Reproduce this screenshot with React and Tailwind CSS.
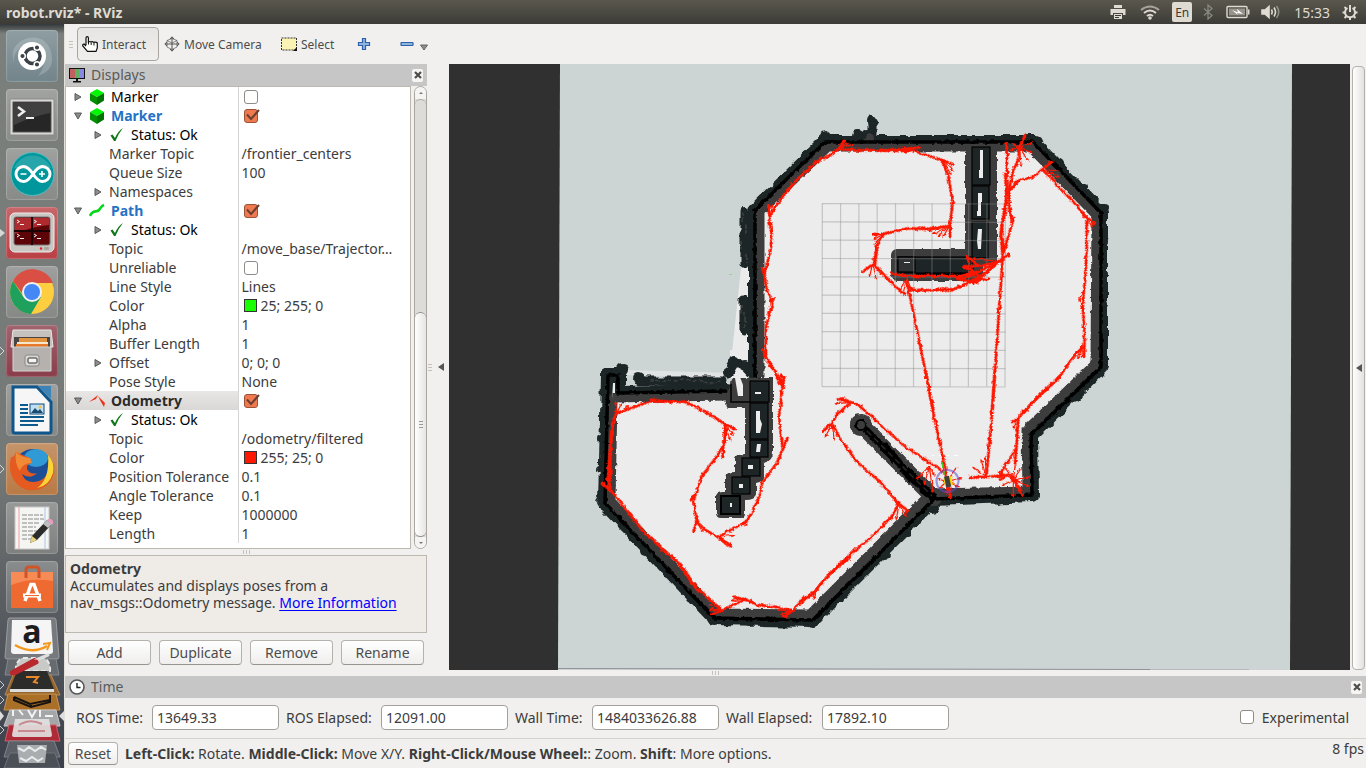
import React from "react";

const RED = "#ff1900";

/* ---------- map drawing ---------- */

function Fan({ at, tips }) {
  const [x, y] = at;
  return tips.map(([tx, ty], i) => {
    const a = Math.atan2(ty - y, tx - x);
    const bx = tx - 11 * Math.cos(a);
    const by = ty - 11 * Math.sin(a);
    const px = 5 * Math.sin(a);
    const py = -5 * Math.cos(a);
    return (
      <g key={i}>
        <line x1={x} y1={y} x2={bx} y2={by} stroke={RED} strokeWidth="3.5" />
        <polygon points={`${tx},${ty} ${bx + px},${by + py} ${bx - px},${by - py}`} fill={RED} />
      </g>
    );
  });
}

function Trail({ d }) {
  return (
    <g fill="none" stroke={RED} strokeLinejoin="round">
      <path d={d} strokeWidth="6" strokeLinecap="round" />
      <path d={d} strokeWidth="11" strokeDasharray="2 3" />
    </g>
  );
}

const trailsWest = [
  "M80 190 L120 176 L190 150 L240 156 L285 155 L345 185 L405 222 L435 238",
  "M405 225 L405 275 L380 320 L335 380 L315 435 L302 450",
  "M400 275 L398 322",
  "M315 435 L312 460 L320 515 L310 546",
  "M320 515 L345 540 L385 562 L424 590",
  "M385 562 L435 532 L465 520 L485 490 L512 430 L515 402 L560 340 L580 295 L593 262",
  "M578 295 L567 200 L578 110 L582 78",
  "M580 110 L545 50 L518 2",
  "M80 185 L66 230 L60 300 L55 380 L62 420",
  "M68 220 L62 300 L60 400",
  "M35 398 L75 435 L110 480 L165 550 L190 568 L225 605 L270 640 L320 715 L345 735 L397 780 L363 793",
  "M200 580 L265 640 L315 712",
  "M397 780 L465 748 L428 742",
  "M465 748 L505 765 L560 771 L610 782 L582 798",
  "M610 782 L640 745 L672 728 L710 680 L745 648 L780 622",
];
const fansWest = [
  [[80, 190], [[76, 152], [96, 157], [118, 168]]],
  [[405, 225], [[438, 236], [432, 258], [421, 272], [398, 328]]],
  [[320, 515], [[341, 550], [354, 548], [310, 550]]],
  [[385, 562], [[434, 555], [415, 592], [428, 586]]],
  [[315, 435], [[300, 444], [302, 456]]],
  [[580, 110], [[573, 68], [560, 96]]],
  [[578, 300], [[576, 258]]],
  [[62, 420], [[50, 378], [34, 396]]],
  [[397, 780], [[354, 746], [355, 763], [360, 778], [361, 794]]],
  [[465, 748], [[426, 738], [420, 752]]],
  [[610, 782], [[560, 780], [570, 794], [580, 803]]],
  [[680, 725], [[671, 750]]],
];

const trailsNorthWest = [
  "M310 130 L345 92",
  "M320 118 L390 121 L480 121 L567 113",
  "M310 130 L260 155 L200 210 L165 250 L125 308",
  "M116 285 L118 330 L126 380 L120 430 L103 490 L98 470",
  "M103 490 L108 530 L125 575 L131 562",
  "M127 580 L108 650 L108 735 L97 718",
  "M102 735 L135 780 L158 825 L162 798",
];
const fansNorthWest = [
  [[322, 116], [[348, 90], [358, 98], [372, 103]]],
  [[122, 315], [[112, 282], [128, 282], [142, 284]]],
  [[103, 500], [[96, 468], [112, 458]]],
  [[125, 590], [[118, 555], [132, 560]]],
  [[155, 825], [[152, 790], [142, 795]]],
];

const trailsNorthEast = [
  "M110 121 L178 114",
  "M60 121 L165 124 L200 136 L240 148 L280 164",
  "M245 150 L265 195 L278 278 L270 345 L270 382",
  "M268 348 L200 357 L145 355 L70 372 L40 372",
  "M70 375 L52 405 L45 460 L6 486",
  "M52 410 L42 455",
  "M40 460 L75 498 L120 545 L138 552",
  "M93 490 L140 498 L330 498 L345 492",
  "M150 540 L210 541 L280 538 L330 515 L388 506",
  "M140 510 L150 560 L175 680 L220 900",
  "M310 470 L370 466 L415 456 L447 433",
  "M320 440 L352 466",
  "M312 468 L335 482 L360 500 L340 520",
  "M290 505 L330 515 L360 500 L425 450",
  "M300 500 L355 485 L410 460",
  "M440 100 L441 180 L443 240 L430 320 L422 370 L428 440 L420 560 L397 900",
  "M436 190 L440 280 L426 350 L430 420",
  "M448 235 L460 180 L475 150 L478 110 L496 74",
  "M447 240 L448 300 L458 335 L440 395 L430 430",
  "M450 240 L475 212 L520 200 L577 154",
  "M548 180 L575 205 L600 235 L640 275 L675 318 L705 343",
  "M680 320 L680 420 L676 500 L668 580 L674 680 L672 742",
  "M668 712 L630 755 L600 798 L530 865 L498 900",
];
const fansNorthEast = [
  [[245, 148], [[284, 165], [280, 182], [275, 196], [262, 200]]],
  [[268, 348], [[203, 362], [218, 372], [232, 380], [247, 385]]],
  [[72, 372], [[38, 376], [38, 390], [40, 405]]],
  [[38, 460], [[4, 489], [28, 504], [50, 509], [68, 498]]],
  [[140, 505], [[116, 545], [128, 556], [158, 547]]],
  [[440, 140], [[440, 96], [450, 128]]],
  [[478, 112], [[520, 97], [518, 130], [507, 155], [484, 172], [450, 120], [498, 70], [455, 100]]],
  [[548, 180], [[597, 182], [600, 202], [592, 218], [580, 152]]],
  [[450, 240], [[470, 210], [485, 206]]],
  [[677, 318], [[706, 343], [700, 357], [684, 348]]],
  [[668, 540], [[656, 576], [668, 580]]],
  [[668, 710], [[638, 738], [652, 750], [665, 745]]],
  [[420, 455], [[452, 432], [370, 475], [350, 515], [328, 520], [300, 512], [335, 445]]],
  [[340, 485], [[305, 470], [285, 503], [318, 438], [355, 525]]],
  [[448, 290], [[462, 332], [455, 345]]],
];

const trailsSouth = [
  "M376 0 L386 55 L400 130 L437 300 L452 384",
  "M585 0 L575 145 L560 312",
  "M508 323 L560 321 L600 317 L630 315 L650 340 L668 374",
  "M636 310 L602 328",
  "M780 20 L705 90 L655 143 L636 160",
  "M655 145 L651 210 L645 280",
  "M645 240 L625 275 L610 290 L600 330",
  "M437 310 L400 285 L310 225 L270 190 L215 140 L172 102 L150 96 L112 84",
  "M150 100 L112 132 L95 160 L66 186",
  "M97 162 L120 205 L170 275 L240 335 L295 400 L326 424",
  "M297 400 L275 440 L210 505 L155 550 L85 615 L40 672 L0 695",
];
const fansSouth = [
  [[558, 318], [[516, 290], [542, 266], [556, 260], [506, 323]]],
  [[655, 145], [[632, 160], [638, 180], [648, 188]]],
  [[640, 330], [[690, 320], [690, 350], [666, 375], [640, 384], [666, 290], [647, 272], [592, 305], [612, 288], [602, 348], [660, 335]]],
  [[440, 335], [[472, 292], [488, 323], [478, 352], [452, 388], [416, 356], [410, 325], [425, 273], [440, 375], [462, 340]]],
  [[388, 290], [[347, 328], [372, 347], [399, 370], [404, 318]]],
  [[150, 98], [[103, 101], [108, 86], [122, 78]]],
  [[97, 162], [[63, 189], [74, 203], [103, 213]]],
  [[297, 403], [[328, 428], [320, 442], [288, 452], [272, 442]]],
  [[40, 665], [[40, 690], [0, 705]]],
];

function Layer({ x, y, trails, fans }) {
  return (
    <g transform={`translate(${x} ${y}) scale(0.33333)`}>
      {trails.map((d, i) => (
        <Trail key={i} d={d} />
      ))}
      {fans.map(([at, tips], i) => (
        <Fan key={i} at={at} tips={tips} />
      ))}
    </g>
  );
}

const wall =
  "M755 377 V210 L825 142 L1033 142 L1101 213 L1101 367 L1031 435 L1032 495 L934 499 L813 620 L714 618 L605 503 L608 375 L618 375 L618 393 L727 391";
const wallInner =
  "M760 377 V212 L828 147 L1030 147 L1096 215 L1095 364 L1026 430 L1027 491 L931 493 L810 614 L717 613 L611 501 L613 398 L727 396";
const bumps = [
  [825, 137, 6], [873, 122, 6], [858, 135, 5], [867, 135, 5], [1036, 142, 6], [1058, 164, 5], [1083, 187, 4],
  [1103, 208, 5], [1105, 241, 4], [1105, 273, 4], [1105, 305, 4], [1104, 337, 3], [1100, 370, 7], [1075, 397, 5],
  [1034, 495, 5], [1000, 499, 5], [932, 507, 6], [908, 532, 4], [885, 554, 5], [840, 600, 4], [813, 621, 7],
  [748, 621, 5], [714, 619, 8], [690, 597, 5], [667, 573, 5], [645, 551, 5], [624, 527, 4], [602, 503, 6],
  [600, 470, 4], [600, 439, 4], [607, 374, 6], [622, 370, 6], [639, 379, 6], [745, 212, 5], [728, 373, 5], [735, 361, 5], [745, 365, 5], [756, 378, 6],
];

const gridLines = [0, 1, 2, 3, 4, 5, 6, 7, 8, 9, 10];

function MapView() {
  return (
    <svg viewBox="449 64 901 606" className="block h-full w-full" role="img" aria-label="3D view of the robot map">
      <defs>
        <filter id="rough" x="449" y="64" width="901" height="606" filterUnits="userSpaceOnUse">
          <feTurbulence type="fractalNoise" baseFrequency="0.09" numOctaves="2" seed="4" />
          <feDisplacementMap in="SourceGraphic" scale="7" xChannelSelector="R" yChannelSelector="G" />
        </filter>
        <filter id="grain" x="449" y="64" width="901" height="606" filterUnits="userSpaceOnUse">
          <feTurbulence type="fractalNoise" baseFrequency="0.2" numOctaves="2" seed="9" />
          <feDisplacementMap in="SourceGraphic" scale="3.5" xChannelSelector="R" yChannelSelector="G" />
        </filter>
      </defs>
      <rect x="449" y="64" width="901" height="606" fill="#303030" />
      <polygon points="560,64 1292,64 1290,670 558,670" fill="#cdd4d4" />
      <path d="M558 668.500 L1150 669.500" stroke="#8f9494" strokeWidth="1" />
      <path d="M1150 669.500 H1249" stroke="#b4baba" strokeWidth="1" />
      <path d="M741 268 L731 362 L748 362 L752 268 Z" fill="#ebebeb" />
      <path d="M625 370 L735 373 L735 378 L625 375 Z" fill="#dfe3e3" />
      <path d="M730 350 H748 V378 H730 Z" fill="#ebebeb" />
      <path d={wall + " Z"} fill="#ececec" />
      <path d="M727 391 L755 377 L761 400 L735 405 Z" fill="#ececec" />

      <g filter="url(#rough)">
        <g stroke="#1e2526" fill="none" strokeLinejoin="round" strokeLinecap="round">
          <path d={wall} strokeWidth="14" />
          <path d="M744 213 V264 M744 300 V331 M640 381 H722 M872 124 V138 M728 374 L735 362 L746 368 L757 380" strokeWidth="9" />
        </g>
        {bumps.map(([x, y, r], i) => (
          <circle key={i} cx={x} cy={y} r={r} fill="#1e2526" />
        ))}
        <path d="M742 212 v10 m4 2 v12 m-5 6 v8 m5 4 v8 M741 304 v10 m4 -2 v16 M650 381 l14 -1 l12 2 l16 -2 l18 2 l10 -1" stroke="#3c4142" fill="none" strokeWidth="1.500" strokeDasharray="4 2" />
      </g>

      <g filter="url(#grain)">
        <g fill="none" stroke="#3c3c3c" strokeLinejoin="round">
          <path d={wallInner} strokeWidth="9" />
          <path d="M861 425 L934 498" strokeWidth="16" strokeLinecap="round" />
        </g>
        <g fill="#3c3c3c">
          <circle cx="861" cy="425" r="11" />
          <rect x="965" y="145" width="32" height="120" rx="4" />
          <rect x="891" y="249" width="92" height="32" rx="6" />
          <path d="M733 378 H773 V452 Q773 461 764 463 V478 Q764 482 756 484 V494 Q756 500 745 500 V514 Q745 518 740 518 H721 Q716 518 716 513 V496 Q717 491 725 491 V477 Q726 472 735 472 V459 Q737 454 745 454 V408 H730 Q725 408 726 396 Z" />
          <path d="M870 132 q6 4 3 12 h-10 q0 -6 7 -12 Z" />
        </g>
      </g>

      <g fill="#1e2526" stroke="#000000" strokeWidth="1.200">
        <rect x="972" y="147" width="18" height="38" />
        <rect x="972" y="186" width="17" height="33" />
        <rect x="972" y="222" width="16" height="36" />
        <rect x="898" y="257" width="75" height="16" />
        <rect x="898" y="257" width="17" height="15" fill="#303334" />
        <rect x="750" y="381" width="19" height="21" />
        <rect x="750" y="403" width="18" height="36" />
        <rect x="750" y="440" width="18" height="17" />
        <rect x="742" y="458" width="18" height="18" />
        <rect x="732" y="477" width="18" height="17" />
        <rect x="721" y="496" width="19" height="18" strokeWidth="2" />
        <path d="M731 384 V402 H750" fill="none" strokeWidth="1.500" />
      </g>
      <g fill="#ececec">
        <path d="M980 150 h3 v28 h-4 v-8 h1 Z" />
        <path d="M978 193 h4 v9 h-1 v14 h-4 v-5 h1 Z" />
        <path d="M978 229 h4 l-1 20 h-3 l-1 -8 Z" />
        <rect x="904" y="262" width="6" height="1" />
        <rect x="755" y="392" width="6" height="2" />
        <path d="M756 411 h4 v8 l2 5 l-2 9 h-4 Z" />
        <path d="M757 444 h4 l-1 8 h-4 Z" />
        <rect x="748" y="465" width="5" height="4" />
        <rect x="739" y="484" width="4" height="4" />
        <rect x="730" y="503" width="2" height="4" />
        <path d="M735 378 l5 -1 l3 8 v11 h-5 Z" />
        <path d="M613 383 h2 v10 h-3 v6 Z" />
      </g>

      <g fill="none" stroke="#000000" strokeLinejoin="round" filter="url(#grain)">
        <path d={wall} strokeWidth="3.500" />
        <circle cx="861" cy="425" r="5" strokeWidth="2" />
        <path d="M865 429 L934 498" strokeWidth="7" />
        <path d="M884 447 L895 458 M905 470 L916 481 M924 490 L932 496" strokeWidth="9" strokeLinecap="round" />
        <path d="M916 274 H975" strokeWidth="2" />
      </g>
      <path d="M867 431 L932 496" stroke="#24292a" strokeWidth="1.500" strokeDasharray="6 4" />

      <g stroke="#8c8c8c" strokeOpacity="0.420" strokeWidth="1.200">
        {gridLines.map((n) => (
          <React.Fragment key={n}>
            <line x1={822.3 + n * 18.3} y1="203.500" x2={822 + n * 18.3} y2="386.500" />
            <line x1="822" y1={203.6 + n * 18.3} x2="1005.500" y2={204 + n * 18.3} />
          </React.Fragment>
        ))}
      </g>

      <g filter="url(#grain)">
        <Layer x={590} y={350} trails={trailsWest} fans={fansWest} />
        <Layer x={730} y={110} trails={trailsNorthWest} fans={fansNorthWest} />
        <Layer x={860} y={110} trails={trailsNorthEast} fans={fansNorthEast} />
        <Layer x={800} y={370} trails={trailsSouth} fans={fansSouth} />
      </g>

      <g>
        <circle cx="947.500" cy="481" r="11" fill="none" stroke="#5a4fd0" strokeOpacity="0.550" strokeWidth="2" />
        <rect x="944" y="477" width="8" height="9" fill="#f0e000" transform="rotate(-12 948 481)" />
        <rect x="945" y="476" width="5" height="11" fill="#404040" transform="rotate(-12 948 481)" />
        <path d="M942 462 l1 6 M944 471 v4" stroke="#3fd020" strokeWidth="1.500" />
        <path d="M932 455.500 h2 m5 0 h2 m5 0 h3 m5 0 h4" stroke="#ffffff" strokeWidth="1" />
        <rect x="729" y="274" width="3" height="1" fill="#86dc86" />
      </g>
    </svg>
  );
}

/* ---------- launcher ---------- */

const UbuntuIcon = () => (
  <svg viewBox="0 0 52 52" className="h-full w-full">
    <path d="M8 34 Q2 14 22 8 Q40 5 45 22 Q50 40 32 46 Q40 36 38 26 Q26 6 14 18 Q6 24 8 34Z" fill="#fff" opacity="0.180" />
    <circle cx="26" cy="26" r="14" fill="#fff" />
    <circle cx="26.500" cy="26" r="7.500" fill="none" stroke="#3c4245" strokeWidth="3.500" />
    <g stroke="#fff" strokeWidth="1.500" fill="#3c4245">
      <circle cx="16.500" cy="26" r="2.800" />
      <circle cx="31" cy="17.500" r="2.800" />
      <circle cx="31" cy="34.500" r="2.800" />
    </g>
  </svg>
);
const TerminalIcon = () => (
  <svg viewBox="0 0 52 52" className="h-full w-full">
    <rect x="4" y="10" width="44" height="36" rx="1" fill="#d8d8d6" stroke="#8a8a88" />
    <rect x="7" y="13" width="38" height="30" fill="#262626" stroke="#555" />
    <path d="M8 14 H44 V24 Q24 28 8 36 Z" fill="#fff" opacity="0.120" />
    <path d="M12 18 L18 22.500 L12 27" fill="none" stroke="#eee" strokeWidth="2.500" />
    <rect x="20" y="28" width="8" height="2" fill="#eee" />
  </svg>
);
const ArduinoIcon = () => (
  <svg viewBox="0 0 52 52" className="h-full w-full">
    <circle cx="26.500" cy="26" r="21.500" fill="#00979c" stroke="#55bcc0" />
    <path d="M8 20 A20 20 0 0 1 45 20 Q26 24 8 20Z" fill="#fff" opacity="0.150" />
    <path
      d="M27 26 C23 20 20 18.500 17.500 18.500 A7.500 7.500 0 0 0 17.500 33.500 C20 33.500 23 32 27 26 C31 20 34 18.500 36.500 18.500 A7.500 7.500 0 0 1 36.500 33.500 C34 33.500 31 32 27 26Z"
      fill="none"
      stroke="#fff"
      strokeWidth="3"
    />
    <path d="M14.500 26 h6 M33 26 h6 M36 23 v6" stroke="#fff" strokeWidth="1.600" />
  </svg>
);
const TerminatorIcon = () => (
  <svg viewBox="0 0 52 52" className="h-full w-full">
    <rect x="4" y="6" width="44" height="39" rx="5" fill="#c9c6c2" stroke="#eee" />
    <rect x="8" y="10" width="36" height="28" rx="2" fill="#5c0408" stroke="#777" />
    <path d="M9 11 H43 V18 Q24 20 9 27Z" fill="#d33a3e" opacity="0.700" />
    <path d="M26 10 V38 M8 24 H44" stroke="#1c0304" strokeWidth="2" />
    <path d="M11 13 l2.500 1.500 l-2.500 1.500 M28 13 l2.500 1.500 l-2.500 1.500 M11 27 l2.500 1.500 l-2.500 1.500 M28 27 l2.500 1.500 l-2.500 1.500" fill="none" stroke="#eee" />
    <path d="M14 17.500 h4 M31 17.500 h4 M14 31.500 h4 M31 31.500 h4" stroke="#eee" />
    <circle cx="35" cy="41.500" r="1.200" fill="#e02020" />
    <rect x="38" y="40" width="5" height="3" rx="1" fill="#aaa69f" />
  </svg>
);
const ChromeIcon = () => (
  <svg viewBox="0 0 52 52" className="h-full w-full">
    <circle cx="26" cy="26" r="22" fill="#ffcd40" />
    <path d="M7 15 A22 22 0 0 0 25 48 L35 31 L26 26 L17 30Z" fill="#1fa05d" />
    <path d="M7 15 A22 22 0 0 1 47 17 L26 17 L18 30Z" fill="#da4f43" />
    <circle cx="26" cy="26" r="10" fill="#f1f1f1" />
    <circle cx="26" cy="26" r="8" fill="#4587f4" />
  </svg>
);
const FilesIcon = () => (
  <svg viewBox="0 0 52 52" className="h-full w-full">
    <path d="M7 5 H45 L47 22 H5Z" fill="#c5c2be" stroke="#e8e6e4" />
    <rect x="8" y="12" width="36" height="11" fill="#4a4542" />
    <path d="M13 13 H41 V22 H13Z" fill="#e2943e" />
    <path d="M11 17 H42 V22 H11Z" fill="#f6e6cc" />
    <path d="M10 19 H42 V23 H10Z" fill="#e8782a" />
    <path d="M7 22 H45 V46 H7Z" fill="#b4b1ae" stroke="#d5d3d1" />
    <rect x="19" y="30" width="14" height="11" rx="2" fill="#d8d6d4" stroke="#8a8784" />
    <rect x="22" y="33" width="9" height="5" rx="1" fill="#f4f4f4" stroke="#333" />
  </svg>
);
const WriterIcon = () => (
  <svg viewBox="0 0 52 52" className="h-full w-full">
    <path d="M7 3 H31 L45 18 V47 Q45 49 43 49 H9 Q7 49 7 47Z" fill="#f6f6f6" stroke="#0f568c" strokeWidth="3" />
    <path d="M32 2 H45 V15Z" fill="#3d83b6" />
    <path d="M14 21 h8 M14 25 h8 M14 29 h8 M14 33 h24 M14 37 h24 M14 41 h18" stroke="#0d5a8e" strokeWidth="2" />
    <rect x="24" y="20" width="14" height="10" fill="#bfe0f4" stroke="#0d4b78" />
    <path d="M25 29 l4 -5 l3 3 l2 -2 l3 4Z" fill="#1b4b70" />
    <circle cx="34" cy="23" r="1.500" fill="#f5c542" />
  </svg>
);
const FirefoxIcon = () => (
  <svg viewBox="0 0 52 52" className="h-full w-full">
    <circle cx="27" cy="25" r="19" fill="#1d4e96" />
    <ellipse cx="30" cy="15" rx="12" ry="9" fill="#2f9ad6" />
    <path d="M5 14 Q8 15 10 9 Q16 12 24 15 L26 20 Q20 21 21 26 Q24 32 31 30 Q24 37 16 31 Q20 42 33 38 Q44 34 42 18 Q48 26 48 20 Q50 40 34 46 Q16 51 7 36 Q2 27 5 14Z" fill="#e45a20" />
    <path d="M42 12 Q49 20 47 30 Q43 43 31 45 Q44 36 42 12Z" fill="#fbd436" />
    <path d="M10 9 Q14 14 24 15 L26 20 Q16 20 14 28 Q8 20 10 9Z" fill="#f08a35" />
  </svg>
);
const GeditIcon = () => (
  <svg viewBox="0 0 52 52" className="h-full w-full">
    <rect x="9" y="5" width="34" height="42" fill="#f5f5f3" stroke="#c8c8c6" />
    <path d="M13 5 V47" stroke="#f0a0a0" />
    <path d="M39 5 V47" stroke="#a9c6ea" />
    <path d="M16 13 h21 M16 17 h22 M16 21 h18 M16 25 h14 M16 29 h18 M16 33 h12 M16 37 h10" stroke="#8a8a88" strokeDasharray="5 1" />
    <path d="M24 41 L26 34 L41 18 L46 22 L31 38Z" fill="#2b2b2b" />
    <path d="M24 41 L26 34 L31 38Z" fill="#e6d47a" />
    <path d="M37 22 L41 18 L46 22 L42 26Z" fill="#bdbdbd" />
    <path d="M41 18 Q44 15 47 19 Q48 21 46 23Z" fill="#e89cc0" />
  </svg>
);
const SoftwareIcon = () => (
  <svg viewBox="0 0 52 52" className="h-full w-full">
    <path d="M20 18 V9 Q20 6 23 6 H30 Q33 6 33 9 V18" fill="none" stroke="#cf5428" strokeWidth="3" />
    <path d="M5 11 H47 V47 H5Z" fill="#ee6a30" />
    <path d="M5 11 H47 V20 Q26 16 5 24Z" fill="#f68b55" />
    <path d="M20 11 V17 M33 11 V17" stroke="#cf5428" strokeWidth="3" />
    <path d="M19 40 L25 23.500 H28 L34 40" fill="none" stroke="#fff" strokeWidth="3.500" />
    <path d="M17 34.500 H35" stroke="#fff" strokeWidth="4" />
    <path d="M19 34.500 H33" stroke="#ee6a30" strokeWidth="1" />
  </svg>
);

const apps = [
  { name: "Search", icon: UbuntuIcon, tile: "bg-[#72858b]" },
  { name: "Terminal", icon: TerminalIcon, tile: "bg-[#8a8c8a]" },
  { name: "Arduino", icon: ArduinoIcon, tile: "bg-[#888a88]" },
  { name: "Terminator", icon: TerminatorIcon, tile: "bg-[#b94045]", mark: "solid" },
  { name: "Chrome", icon: ChromeIcon, tile: "bg-[#868886]" },
  { name: "Files", icon: FilesIcon, tile: "bg-[#8a3d4a]", mark: "hollow" },
  { name: "Writer", icon: WriterIcon, tile: "bg-[#868886]" },
  { name: "Firefox", icon: FirefoxIcon, tile: "bg-[#b87a45]", mark: "hollow" },
  { name: "Text Editor", icon: GeditIcon, tile: "bg-[#7d807f]" },
  { name: "Software", icon: SoftwareIcon, tile: "bg-[#6d7072]" },
];

function Launcher() {
  return (
    <nav aria-label="Launcher" className="flex w-[65px] shrink-0 flex-col border-r border-[#e4e0da] bg-gradient-to-b from-[#7c807d] via-[#747876] via-60% to-[#3b3f4a]">
      <div className="flex flex-col gap-[7px] bg-gradient-to-b from-[#33383a] to-transparent to-[10px] pt-[6px]">
        {apps.map(({ name, icon: Icon, tile, mark }) => (
          <div key={name} className="flex items-center">
            <svg viewBox="0 0 6 10" className="h-[10px] w-[6px] shrink-0">
              {mark === "solid" && <path d="M0 1 L5 5 L0 9Z" fill="#d8d8d8" />}
              {mark === "hollow" && <path d="M0 1 L4 5 L0 9" fill="none" stroke="#d8d8d8" />}
            </svg>
            <button aria-label={name} className={`size-[52px] overflow-hidden rounded-[4px] bg-gradient-to-b from-white/20 to-transparent shadow-[inset_0_0_1px_1px_rgba(255,255,255,0.2)] ${tile}`}>
              <Icon />
            </button>
          </div>
        ))}
      </div>
      <svg viewBox="0 0 64 155" className="block w-full shrink-0 overflow-visible" role="img" aria-label="More applications">
        <path d="M9 5 H54 Q56 5 56 7 L59 44 Q59 46 57 46 H7 Q5 46 5 44 L8 7Z" fill="#767a7e" stroke="#9a9da0" />
        <path d="M12 7 H51 L53 38 Q53 41 50 41 H14 Q11 41 11 38Z" fill="#f5f5f5" />
        <text x="32" y="30" textAnchor="middle" fontFamily="Open Sans, sans-serif" fontWeight="700" fontSize="32" fill="#1c1c1c">a</text>
        <path d="M15 32 Q32 42 47 33" fill="none" stroke="#f39a1e" strokeWidth="2.500" />
        <path d="M43 31 L50 30 L47 37" fill="none" stroke="#f39a1e" strokeWidth="2" />
        <path d="M8 46 H56 L59 62 H5Z" fill="#666b70" stroke="#84888b" />
        <path d="M16 58 Q15 49 22 45 L44 45 Q51 49 50 58 Z" fill="#c9c9c7" stroke="#e7e7e5" strokeWidth="2" strokeDasharray="5 3" />
        <path d="M13 60 L35 48" stroke="#b8282c" strokeWidth="6" strokeLinecap="round" />
        <path d="M36 47 L48 42" stroke="#dedede" strokeWidth="3" strokeLinecap="round" />
        <path d="M13 62 H51 L60 82 H5Z" fill="#94652f" stroke="#b98b55" />
        <path d="M17 58 H47 L54 76 H10Z" fill="#2c2c2b" />
        <path d="M10 76 H54 V79 H10Z" fill="#ddd" />
        <path d="M14 60 L36 49" stroke="#b8282c" strokeWidth="5" strokeLinecap="round" />
        <path d="M26 64 H38 L34 69 L38 70" fill="none" stroke="#e8892e" strokeWidth="2" />
        <path d="M8 81 H56 L60 97 H4Z" fill="#aa7028" stroke="#c59253" />
        <path d="M14 84 L30 91 L50 87 V82 M14 84 V87 L31 94 L50 89 V87 M31 91 V94" fill="none" stroke="#181411" strokeWidth="2" />
        <path d="M10 97 H56 L60 113 H4Z" fill="#a5a6a8" stroke="#c6c8ca" />
        <path d="M13 97 v6 m6 -6 l4 5 m5 -5 l4 7 l4 -7 m4 0 v7 m5 -1 h8" stroke="#f3f3f3" strokeWidth="2" fill="none" />
        <path d="M9 112 H56 L60 128 H5Z" fill="#af2a37" stroke="#d15e69" />
        <path d="M15 106 H49 L52 122 Q52 124 50 124 H14 Q12 124 12 122Z" fill="#e3e3e3" opacity="0.900" />
        <path d="M19 112 Q30 105 42 111 M18 118 H45" stroke="#c88a8e" fill="none" strokeWidth="2" />
        <path d="M9 128 H54 L60 144 H4Z" fill="#5c6066" stroke="#7f848a" />
        <path d="M10 140 H55 L60 155 H4Z" fill="#4b4f56" stroke="#6c7178" />
        <path d="M17 132 H47 L45 150 H19Z" fill="#a9adb0" />
        <path d="M18 135 l6 3 l5 -4 l6 4 l6 -4 l5 3 M20 145 l6 3 l6 -4 l6 4 l5 -3" stroke="#e9ebec" strokeWidth="2" fill="none" />
        <g fill="none" stroke="#ccc">
          <path d="M0 68 L4 72 L0 76 M0 83 L4 87 L0 91 M0 113 L4 117 L0 121" />
        </g>
        <path d="M0 98 L4 103 L0 108Z M64 98 L59 103 L64 108Z" fill="#ddd" />
      </svg>
    </nav>
  );
}

/* ---------- small parts ---------- */

const MonitorIcon = () => (
  <svg viewBox="0 0 16 16" className="size-4 shrink-0">
    <rect x="0" y="1" width="16" height="11" fill="#111" />
    <rect x="1" y="2" width="5" height="9" fill="#c06060" />
    <rect x="6" y="2" width="4" height="9" fill="#60b060" />
    <rect x="10" y="2" width="5" height="9" fill="#8888e4" />
    <path d="M7 12 h2 v2 h3 v1.500 H4 V14 h3Z" fill="#111" />
  </svg>
);
const ClockIcon = () => (
  <svg viewBox="0 0 16 16" className="size-4 shrink-0">
    <circle cx="8" cy="8" r="7" fill="#fff" stroke="#555" strokeWidth="1.600" />
    <path d="M8 4 V8.500 H11.500" fill="none" stroke="#222" strokeWidth="1.400" />
  </svg>
);

function CloseButton({ label }) {
  return (
    <button aria-label={label} className="flex h-[15px] w-[13px] items-center justify-center rounded-[3px] border border-[#c9c6c2] bg-[#f6f5f4]">
      <svg viewBox="0 0 8 8" className="size-2">
        <path d="M1 1 L7 7 M7 1 L1 7" stroke="#4c4c4c" strokeWidth="2.200" />
      </svg>
    </button>
  );
}

function CheckBox({ label, checked, id }) {
  return (
    <span className="relative inline-flex size-[14px] shrink-0">
      <input
        id={id}
        type="checkbox"
        aria-label={label}
        defaultChecked={checked}
        className="peer size-[14px] appearance-none rounded-[3px] border border-[#8f8b87] bg-white checked:border-[#9c5238] checked:bg-[#f07a50]"
      />
      <svg viewBox="0 0 16 14" className="pointer-events-none absolute top-0 left-0 hidden h-[14px] w-4 peer-checked:block">
        <path d="M3 5.500 L7 10 L15 1" fill="none" stroke="#6b3f30" strokeWidth="2" />
      </svg>
    </span>
  );
}

function Arrow({ open }) {
  return (
    <svg viewBox="0 0 8 8" className="size-2 shrink-0">
      <path d={open ? "M0.500 1 H7.500 L4 7Z" : "M1 0.500 V7.500 L7 4Z"} fill="#8c8c8c" stroke="#5a5a5a" />
    </svg>
  );
}

const rowIcons = {
  marker: (
    <svg viewBox="0 0 16 16" className="size-4 shrink-0">
      <path d="M8 0 L15 4 L8 8 L1 4Z" fill="#00f800" />
      <path d="M1 4 L8 8 V16 L1 11.500Z" fill="#009000" />
      <path d="M15 4 L8 8 V16 L15 11.500Z" fill="#007400" />
    </svg>
  ),
  path: (
    <svg viewBox="0 0 16 16" className="size-4 shrink-0">
      <path d="M1 13 C4 6 7 10 10 7 C12 5 12 3 15 2" fill="none" stroke="#00d818" strokeWidth="2.600" />
    </svg>
  ),
  odometry: (
    <svg viewBox="0 0 16 16" className="size-4 shrink-0">
      <path d="M0 9 L9 2 L7 6Z M9 3 L16 10 L15 14 L12 9Z" fill="#f03018" />
    </svg>
  ),
  ok: (
    <svg viewBox="0 0 16 16" className="size-4 shrink-0">
      <path d="M1.500 8.500 L3.500 7.500 L6 11 Q9 4 14 1 Q9 7 6.500 14 H5Z" fill="#107818" />
    </svg>
  ),
};

const rows = [
  { kind: "top", icon: "marker", name: "Marker", check: false, tone: "text-black" },
  { kind: "top", icon: "marker", name: "Marker", check: true, open: true, tone: "font-bold text-[#2672c4]" },
  { kind: "status", name: "Status: Ok" },
  { kind: "prop", name: "Marker Topic", value: "/frontier_centers" },
  { kind: "prop", name: "Queue Size", value: "100" },
  { kind: "prop", name: "Namespaces", arrow: true },
  { kind: "top", icon: "path", name: "Path", check: true, open: true, tone: "font-bold text-[#2672c4]" },
  { kind: "status", name: "Status: Ok" },
  { kind: "prop", name: "Topic", value: "/move_base/Trajector…" },
  { kind: "prop", name: "Unreliable", check: false },
  { kind: "prop", name: "Line Style", value: "Lines" },
  { kind: "prop", name: "Color", value: "25; 255; 0", swatch: "bg-[#19ff00]" },
  { kind: "prop", name: "Alpha", value: "1" },
  { kind: "prop", name: "Buffer Length", value: "1" },
  { kind: "prop", name: "Offset", value: "0; 0; 0", arrow: true },
  { kind: "prop", name: "Pose Style", value: "None" },
  { kind: "top", icon: "odometry", name: "Odometry", check: true, open: true, selected: true, tone: "font-bold text-[#2b2b2b]" },
  { kind: "status", name: "Status: Ok" },
  { kind: "prop", name: "Topic", value: "/odometry/filtered" },
  { kind: "prop", name: "Color", value: "255; 25; 0", swatch: "bg-[#ff1900]" },
  { kind: "prop", name: "Position Tolerance", value: "0.1" },
  { kind: "prop", name: "Angle Tolerance", value: "0.1" },
  { kind: "prop", name: "Keep", value: "1000000" },
  { kind: "prop", name: "Length", value: "1" },
];

function NameCell({ row }) {
  if (row.kind === "top")
    return (
      <div className={`flex items-center pl-2 ${row.tone}`}>
        <Arrow open={row.open} />
        <span className="ml-[7px] flex">{rowIcons[row.icon]}</span>
        <span className="ml-[6px]">{row.name}</span>
      </div>
    );
  if (row.kind === "status")
    return (
      <div className="flex items-center pl-7 text-black">
        <Arrow />
        <span className="ml-[7px] flex">{rowIcons.ok}</span>
        <span className="ml-[6px]">{row.name}</span>
      </div>
    );
  return (
    <div className="flex items-center pl-7">
      <span className="flex w-[15px]">{row.arrow && <Arrow />}</span>
      <span>{row.name}</span>
    </div>
  );
}

function PropertyTree() {
  return (
    <div className="flex min-h-0 flex-1 gap-[3px]">
      <div className="flex-1 overflow-hidden border border-[#bcb8b0] bg-white">
        <table className="w-full table-fixed border-collapse">
          <tbody>
            {rows.map((row, i) => (
              <tr key={i} className="h-[19px] leading-[19px] whitespace-nowrap">
                <td className={`w-1/2 border-r border-[#d5d5d5] p-0 ${row.selected ? "bg-gradient-to-b from-[#e8e7e6] to-[#d9d8d6]" : ""}`}>
                  <NameCell row={row} />
                </td>
                <td className="p-0">
                  <div className="flex items-center pl-[3px]">
                    {row.check !== undefined && (
                      <span className="flex pl-[2px]">
                        <CheckBox label={row.name} checked={row.check} />
                      </span>
                    )}
                    {row.swatch && <span className={`mr-1 ml-[2px] size-[13px] border border-[#333] ${row.swatch}`} />}
                    {row.value}
                  </div>
                </td>
              </tr>
            ))}
          </tbody>
        </table>
      </div>
      <div aria-hidden="true" className="flex w-[13px] flex-col overflow-hidden rounded-full border border-[#aaa69f] bg-[#dedcd9]">
        <div className="flex h-[12px] items-center justify-center bg-[#f5f4f3]">
          <svg viewBox="0 0 6 4" className="h-1 w-[6px]"><path d="M1 3 L3 1 L5 3Z" fill="#777" /></svg>
        </div>
        <div className="flex-1 rounded-t-full border-t border-[#aaa69f]" />
        <div className="flex h-[225px] flex-col items-center justify-center gap-[2px] rounded-full border-y border-[#918d88] bg-gradient-to-r from-white to-[#e6e5e3]">
          <span className="h-px w-1 bg-[#999]" />
          <span className="h-px w-1 bg-[#999]" />
          <span className="h-px w-1 bg-[#999]" />
        </div>
        <div className="flex h-[11px] items-center justify-center bg-[#f5f4f3]">
          <svg viewBox="0 0 6 4" className="h-1 w-[6px]"><path d="M1 1 L3 3 L5 1Z" fill="#777" /></svg>
        </div>
      </div>
    </div>
  );
}

function Grip({ vertical }) {
  return (
    <span className={vertical ? "flex gap-[2px]" : "flex flex-col gap-[2px]"}>
      {[0, 1, 2].map((n) => (
        <span key={n} className={vertical ? "h-1 w-px bg-[#c5c1bb]" : "h-px w-1 bg-[#c5c1bb]"} />
      ))}
    </span>
  );
}

const buttonLook =
  "rounded-[4px] border border-[#b5b1ac] border-b-[#989490] bg-gradient-to-b from-white to-[#efeeed] text-[#4c4c4c]";

function PanelTitle({ icon, title }) {
  return (
    <h2 className="flex h-[22px] items-center gap-[6px] bg-[#c6c6c6] pr-[3px] pl-1 text-[#5a5a5a]">
      {icon}
      <span className="flex-1 pb-[2px]">{title}</span>
      <CloseButton label={`Close ${title}`} />
    </h2>
  );
}

function DisplaysPanel() {
  return (
    <section className="flex w-[362px] shrink-0 flex-col">
      <PanelTitle icon={<MonitorIcon />} title="Displays" />
      <PropertyTree />
      <div className="flex h-[6px] items-center justify-center">
        <Grip vertical />
      </div>
      <div className="h-[78px] border border-[#bcb8b0] bg-[#efebe7] px-1 pt-1 leading-[17px]">
        <h3 className="font-bold">Odometry</h3>
        <p>
          Accumulates and displays poses from a<br />
          nav_msgs::Odometry message.{" "}
          <a href="#more" className="text-[#0000ff] underline underline-offset-2">More Information</a>
        </p>
      </div>
      <div className="grid grid-cols-4 gap-2 px-[3px] pt-[7px] pb-[5px]">
        {["Add", "Duplicate", "Remove", "Rename"].map((t) => (
          <button key={t} className={`h-[25px] ${buttonLook}`}>{t}</button>
        ))}
      </div>
    </section>
  );
}

function Toolbar() {
  return (
    <div className="flex h-10 shrink-0 items-center pl-1 text-[12px] text-[#4c4c4c]" role="toolbar">
      <span className="flex w-2"><Grip /></span>
      <button className="flex h-[34px] w-[82px] items-center gap-1 rounded-[4px] border border-[#a9a5a0] bg-gradient-to-b from-[#e6e5e3] to-[#f0efed] pl-1">
        <svg viewBox="0 0 16 16" className="size-4">
          <path d="M4 9 V2 Q4 0.600 5.200 0.600 Q6.400 0.600 6.400 2 V6 Q8 5 9 6 Q10.500 5.300 11.600 6.400 Q14 5.600 15.300 7 V12 L14 15.400 H5.500 L0.800 10 Q0.300 8.300 2 8 L4 10" fill="#fff" stroke="#111" strokeWidth="1.200" />
          <path d="M6.500 6 V8.500 M9.200 6.500 V9 M12 7 V9.500" stroke="#111" />
        </svg>
        Interact
      </button>
      <button className="ml-[5px] flex h-[34px] w-[112px] items-center gap-1">
        <svg viewBox="0 0 16 16" className="size-4 shrink-0" fill="none" stroke="#555">
          <path d="M8 1 V15 M1 8 H15 M6 3 L8 0.800 L10 3 M6 13 L8 15.200 L10 13 M3 6 L0.800 8 L3 10 M13 6 L15.200 8 L13 10" />
          <path d="M3 4.500 L8 2.500 L13 4.500 V11 L8 13.500 L3 11Z M3 4.500 L8 7 L13 4.500" opacity="0.700" />
        </svg>
        <span className="whitespace-nowrap">Move Camera</span>
      </button>
      <button className="ml-[5px] flex h-[34px] w-[72px] items-center gap-1">
        <svg viewBox="0 0 16 16" className="size-4">
          <rect x="0.500" y="2" width="15" height="12" fill="#fbf3b4" stroke="#333" strokeDasharray="2 1" />
          <path d="M16 11 V15 H12Z" fill="#111" />
        </svg>
        Select
      </button>
      <button aria-label="Add tool" className="ml-[3px] flex size-4 items-center justify-center">
        <svg viewBox="0 0 14 14" className="size-[14px]">
          <path d="M5.500 1.500 H8.500 V5.500 H12.500 V8.500 H8.500 V12.500 H5.500 V8.500 H1.500 V5.500 H5.500Z" fill="#8fb4dd" stroke="#2d62a8" strokeWidth="1.200" />
        </svg>
      </button>
      <button aria-label="Remove tool" className="ml-7 flex items-center gap-[6px]">
        <svg viewBox="0 0 14 14" className="size-[14px]">
          <rect x="1" y="5.500" width="12" height="3" rx="0.500" fill="#8fb4dd" stroke="#2d62a8" strokeWidth="1.200" />
        </svg>
        <svg viewBox="0 0 8 8" className="mt-[5px] size-2"><path d="M0.500 2 H7.500 L4 7Z" fill="#8c8c8c" stroke="#666" /></svg>
      </button>
    </div>
  );
}

function TitleBar() {
  return (
    <header className="flex h-6 shrink-0 items-center bg-gradient-to-b from-[#5a584d] to-[#3c3b37] pr-2 pl-[6px] text-[#dfdbd2]">
      <h1 className="flex-1 font-bold">robot.rviz* - RViz</h1>
      <div className="flex items-center">
        <svg viewBox="0 0 16 16" className="size-4" fill="#dfdbd2">
          <path d="M4 1 H12 V4 H4Z M0.500 5 H15.500 V11 H13 V9 H3 V11 H0.500Z M4 10 H12 V15 H4Z" />
          <path d="M5 11.500 H11 M5 13.500 H9" stroke="#3c3b37" />
        </svg>
        <svg viewBox="0 0 20 16" className="ml-[14px] h-4 w-5" fill="none" stroke="#dfdbd2" strokeWidth="2">
          <path d="M1 6 Q10 -1 19 6" opacity="0.600" />
          <path d="M4 9 Q10 4 16 9" />
          <path d="M7 12 Q10 9.500 13 12" />
          <circle cx="10" cy="14" r="0.800" fill="#dfdbd2" />
        </svg>
        <span className="ml-3 flex h-5 w-5 items-center justify-center rounded-[2px] bg-[#dfdbd2] text-[12px] text-[#3c3b37]">En</span>
        <svg viewBox="0 0 10 16" className="ml-[11px] h-4 w-[10px]" fill="none" stroke="#8b887f" strokeWidth="1.300">
          <path d="M1 4.500 L9 11.500 L5 15 V1 L9 4.500 L1 11.500" />
        </svg>
        <svg viewBox="0 0 24 14" className="ml-[13px] h-[14px] w-6">
          <rect x="1" y="1.500" width="20" height="11" rx="1" fill="none" stroke="#dfdbd2" strokeWidth="1.400" />
          <rect x="3" y="3.500" width="16" height="7" fill="#97948b" />
          <path d="M22 4.500 h1.500 v5 H22Z" fill="#dfdbd2" />
          <path d="M6 5 L12 7.500 L11 4 L17 9 L11 8 L12 10Z" fill="#fff" />
        </svg>
        <svg viewBox="0 0 20 16" className="ml-[11px] h-4 w-5" fill="none" stroke="#dfdbd2" strokeWidth="1.600">
          <path d="M1 6 H4 L8 2.500 V13.500 L4 10 H1Z" fill="#dfdbd2" />
          <path d="M10.500 5.500 Q12 8 10.500 10.500" />
          <path d="M13 3.500 Q16 8 13 12.500" />
          <path d="M15.500 2 Q20 8 15.500 14" opacity="0.450" />
        </svg>
        <span className="ml-[13px]">15:33</span>
        <svg viewBox="0 0 16 16" className="ml-3 size-4" fill="none" stroke="#dfdbd2">
          <path d="M5.500 4 A5 5 0 1 0 10.500 4" strokeWidth="2" />
          <path d="M8 1 V8" strokeWidth="2" />
          <path d="M2.500 3 L4.300 4.700 M13.500 3 L11.700 4.700 M0.500 8.500 H3 M15.500 8.500 H13 M2.500 14 L4.300 12.200 M13.500 14 L11.700 12.200 M8 16 V13.500" strokeWidth="2" />
        </svg>
      </div>
    </header>
  );
}

const clocks = [
  { id: "ros-time", label: "ROS Time:", value: "13649.33", width: "w-[76px]" },
  { id: "ros-elapsed", label: "ROS Elapsed:", value: "12091.00", width: "w-[95px]" },
  { id: "wall-time", label: "Wall Time:", value: "1484033626.88", width: "w-[77px]" },
  { id: "wall-elapsed", label: "Wall Elapsed:", value: "17892.10", width: "w-[96px]" },
];

function TimePanel() {
  return (
    <section>
      <PanelTitle icon={<ClockIcon />} title="Time" />
      <div className="flex h-10 items-center gap-[7px] pr-[17px] pb-[2px] pl-[11px]">
        {clocks.map((c) => (
          <div key={c.id} className="flex items-center">
            <label htmlFor={c.id} className={`whitespace-nowrap ${c.width}`}>{c.label}</label>
            <input id={c.id} defaultValue={c.value} className="h-[25px] w-[127px] rounded-[4px] border border-[#a39f9a] bg-white px-1 text-[#3c3c3c]" />
          </div>
        ))}
        <div className="ml-auto flex items-center gap-2">
          <CheckBox id="experimental" label="Experimental" checked={false} />
          <label htmlFor="experimental">Experimental</label>
        </div>
      </div>
    </section>
  );
}

export default function App() {
  return (
    <div className="flex h-screen flex-col overflow-hidden bg-[#f1f0ee] font-['Noto_Sans','Open_Sans',sans-serif] text-[14px] leading-[19px] text-[#3c3c3c]">
      <TitleBar />
      <div className="flex min-h-0 flex-1">
        <Launcher />
        <main className="flex min-w-0 flex-1 flex-col">
          <Toolbar />
          <div className="flex min-h-0 flex-1">
            <DisplaysPanel />
            <div className="flex w-[22px] shrink-0 items-center justify-between pr-[5px] pl-px">
              <Grip />
              <button aria-label="Collapse left panel">
                <svg viewBox="0 0 6 8" className="h-2 w-[6px]"><path d="M6 0 V8 L0 4Z" fill="#555" /></svg>
              </button>
            </div>
            <div className="min-w-0 flex-1 bg-[#303030]">
              <MapView />
            </div>
            <div className="flex w-4 shrink-0 pt-[2px] pr-px pl-[2px]">
              <button aria-label="Expand right panel" className="flex flex-1 items-center justify-center rounded-[4px] border border-[#b5b1ac] bg-gradient-to-r from-white to-[#e2e1df]">
                <svg viewBox="0 0 6 8" className="h-2 w-[6px]"><path d="M6 0 V8 L0 4Z" fill="#555" /></svg>
              </button>
            </div>
          </div>
          <div className="flex h-[6px] items-center justify-center"><Grip vertical /></div>
          <TimePanel />
          <footer className="flex h-[30px] items-center gap-[7px] border-t border-[#d6d3cf] pr-[2px] pl-[3px]">
            <button className={`h-[23px] w-[50px] ${buttonLook}`}>Reset</button>
            <p className="flex-1 whitespace-nowrap">
              <b>Left-Click:</b> Rotate. <b>Middle-Click:</b> Move X/Y. <b>Right-Click/Mouse Wheel:</b>: Zoom. <b>Shift</b>: More options.
            </p>
            <span className="self-start">8 fps</span>
          </footer>
        </main>
      </div>
    </div>
  );
}
